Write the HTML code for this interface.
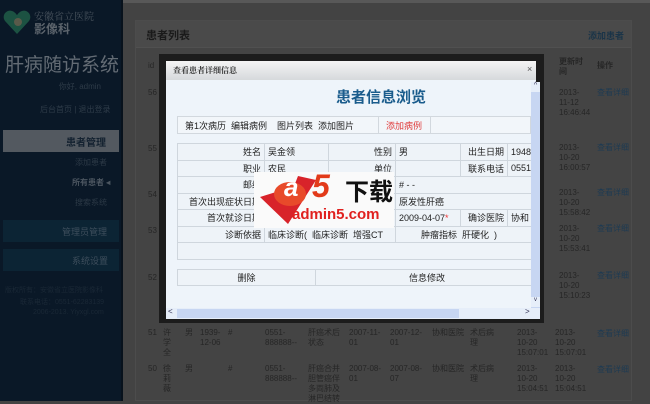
<!DOCTYPE html><html><head><meta charset="utf-8"><style>
*{margin:0;padding:0;box-sizing:border-box}
body{width:650px;height:401px;overflow:hidden;background:#434343;font-family:"Liberation Sans","Noto Sans CJK SC",sans-serif;position:relative}
.a{position:absolute;white-space:nowrap}
.sb{left:0;top:0;width:123px;height:401px;background:#0a1827;border-right:2px solid #08121c}
.t{font-size:8px;color:#262626;line-height:10px}
.lk{color:#1d3a52;font-size:8px}
table{border-collapse:collapse}
.dt td{border:1px solid #cfd6dd;font-size:9px;color:#222;height:16.5px;padding:0 3px;background:#eef3f8}
.r{text-align:right}
</style></head><body>
<div class="a" style="left:0;top:0;width:650px;height:3px;background:#585858"></div>
<div class="a sb"></div>
<div class="a" style="left:3px;top:9px;width:28px;height:26px"><svg width="28" height="26"><path d="M14 25 L2 12 C-2 6 4 0 9 2 C12 3 13 5 14 6 C15 5 16 3 19 2 C24 0 30 6 26 12 Z" fill="#1c5242"/><circle cx="15" cy="13" r="4" fill="#5a5a4a"/></svg></div>
<div class="a" style="left:34px;top:8px;font-size:10px;color:#4a545e;font-family:'Noto Serif CJK SC',serif">安徽省立医院</div>
<div class="a" style="left:34px;top:20px;font-size:12px;color:#5c646c;font-weight:bold">影像科</div>
<div class="a" style="left:5px;top:50px;font-size:19px;color:#636b74">肝病随访系统</div>
<div class="a" style="left:56px;top:81px;font-size:8px;color:#2e3b48;width:45px;text-align:right">你好, admin</div>
<div class="a" style="left:40px;top:104px;font-size:8px;color:#2e3b48">后台首页 | 退出登录</div>
<div class="a" style="left:3px;top:130px;width:116px;height:22px;background:#535960"></div>
<div class="a" style="left:66px;top:134px;font-size:10px;color:#142230;font-weight:bold">患者管理</div>
<div class="a" style="left:75px;top:157px;font-size:8px;color:#2c3946">添加患者</div>
<div class="a" style="left:72px;top:177px;font-size:8px;color:#4c5660;font-weight:bold">所有患者 ◂</div>
<div class="a" style="left:75px;top:197px;font-size:8px;color:#2c3946">搜索系统</div>
<div class="a" style="left:3px;top:220px;width:116px;height:22px;background:#0c2434"></div>
<div class="a" style="left:62px;top:225px;font-size:9px;color:#3e4e5c">管理员管理</div>
<div class="a" style="left:3px;top:249px;width:116px;height:22px;background:#0c2434"></div>
<div class="a" style="left:72px;top:254px;font-size:9px;color:#3e4e5c">系统设置</div>
<div class="a" style="left:5px;top:285px;font-size:7px;color:#1a2836">版权所有：安徽省立医院影像科</div>
<div class="a" style="left:20px;top:297px;font-size:7px;color:#1a2836">联系电话：0551-62283139</div>
<div class="a" style="left:33px;top:309px;font-size:7px;color:#1a2836">2006-2013. Yiyxgl.com</div>
<div class="a" style="left:135px;top:20px;width:497px;height:381px;background:#444;border:1px solid #4c4c4c"></div>
<div class="a" style="left:136px;top:21px;width:495px;height:27px;background:#4a4a4a;border-bottom:1px solid #505050"></div>
<div class="a" style="left:146px;top:27px;font-size:11px;color:#1a1a1a;font-weight:bold">患者列表</div>
<div class="a" style="left:588px;top:29px;font-size:9px;color:#1a3448;font-weight:bold">添加患者</div>
<div class="a t" style="left:148px;top:61px">id</div>
<div class="a t" style="left:559px;top:57px;font-weight:bold">更新时<br>间</div>
<div class="a t" style="left:597px;top:61px;font-weight:bold">操作</div>
<div class="a t" style="left:148px;top:88px">56</div><div class="a t" style="left:559px;top:88px">2013-<br>11-12<br>16:46:44</div><div class="a lk" style="left:597px;top:87px">查看详细</div>
<div class="a t" style="left:148px;top:144px">55</div><div class="a t" style="left:559px;top:143px">2013-<br>10-20<br>16:00:57</div><div class="a lk" style="left:597px;top:142px">查看详细</div>
<div class="a t" style="left:148px;top:190px">54</div><div class="a t" style="left:559px;top:188px">2013-<br>10-20<br>15:58:42</div><div class="a lk" style="left:597px;top:187px">查看详细</div>
<div class="a t" style="left:148px;top:226px">53</div><div class="a t" style="left:559px;top:224px">2013-<br>10-20<br>15:53:41</div><div class="a lk" style="left:597px;top:223px">查看详细</div>
<div class="a t" style="left:148px;top:273px">52</div><div class="a t" style="left:559px;top:271px">2013-<br>10-20<br>15:10:23</div><div class="a lk" style="left:597px;top:270px">查看详细</div>
<div class="a t" style="left:148px;top:328px">51</div><div class="a t" style="left:163px;top:328px">许<br>学<br>全</div><div class="a t" style="left:185px;top:328px">男</div><div class="a t" style="left:200px;top:328px">1939-<br>12-06</div><div class="a t" style="left:228px;top:328px">#</div><div class="a t" style="left:265px;top:328px">0551-<br>888888--</div><div class="a t" style="left:308px;top:328px">肝癌术后<br>状态</div><div class="a t" style="left:349px;top:328px">2007-11-<br>01</div><div class="a t" style="left:390px;top:328px">2007-12-<br>01</div><div class="a t" style="left:432px;top:328px">协和医院</div><div class="a t" style="left:470px;top:328px">术后病<br>理</div><div class="a t" style="left:517px;top:328px">2013-<br>10-20<br>15:07:01</div><div class="a t" style="left:555px;top:328px">2013-<br>10-20<br>15:07:01</div><div class="a lk" style="left:597px;top:328px">查看详细</div>
<div class="a t" style="left:148px;top:364px">50</div><div class="a t" style="left:163px;top:364px">徐<br>莉<br>薇</div><div class="a t" style="left:185px;top:364px">男</div><div class="a t" style="left:228px;top:364px">#</div><div class="a t" style="left:265px;top:364px">0551-<br>888888--</div><div class="a t" style="left:308px;top:364px">肝癌合并<br>胆管癌伴<br>多両肺及<br>淋巴结转</div><div class="a t" style="left:349px;top:364px">2007-08-<br>01</div><div class="a t" style="left:390px;top:364px">2007-08-<br>07</div><div class="a t" style="left:432px;top:364px">协和医院</div><div class="a t" style="left:470px;top:364px">术后病<br>理</div><div class="a t" style="left:517px;top:364px">2013-<br>10-20<br>15:04:51</div><div class="a t" style="left:555px;top:364px">2013-<br>10-20<br>15:04:51</div><div class="a lk" style="left:597px;top:364px">查看详细</div>
<div class="a" style="left:159px;top:54px;width:385px;height:269px;background:#1c1c1c"></div>
<div class="a" style="left:166px;top:61px;width:370px;height:258px;background:#eef4fa"></div>
<div class="a" style="left:166px;top:61px;width:370px;height:19px;background:linear-gradient(#f4f4f4,#d6d9dc)"></div>
<div class="a" style="left:173px;top:65px;font-size:8px;color:#333;font-weight:bold;font-family:'Noto Serif CJK SC',serif">查看患者详细信息</div>
<div class="a" style="left:527px;top:64px;font-size:9px;color:#555">×</div>
<div class="a" style="left:336px;top:86px;font-size:15px;color:#1a5c8c;font-weight:bold">患者信息浏览</div>
<div class="a" style="left:177px;top:116px;width:354px;height:18px;border:1px solid #d2d8de;background:#f2f6fa"></div>
<div class="a" style="left:185px;top:119px;font-size:9px;color:#222">第1次病历&nbsp;&nbsp;编辑病例&nbsp;&nbsp;&nbsp;&nbsp;图片列表&nbsp;&nbsp;添加图片</div>
<div class="a" style="left:378px;top:116px;width:1px;height:18px;background:#d2d8de"></div>
<div class="a" style="left:430px;top:116px;width:1px;height:18px;background:#d2d8de"></div>
<div class="a" style="left:386px;top:119px;font-size:9px;color:#e03b3b">添加病例</div>
<div class="a" style="left:177px;top:143px;width:354px;height:150px;overflow:hidden">
<table class="dt" style="width:362px">
<tr><td class="r" style="width:87px">姓名</td><td style="width:64px">吴金领</td><td class="r" style="width:67px">性别</td><td style="width:65px">男</td><td class="r" style="width:47px">出生日期</td><td>1948</td></tr>
<tr><td class="r">职业</td><td>农民</td><td class="r">单位</td><td></td><td class="r">联系电话</td><td>0551</td></tr>
<tr><td class="r">邮编</td><td></td><td></td><td colspan="3"># - -</td></tr>
<tr><td class="r">首次出现症状日期</td><td></td><td></td><td colspan="3">原发性肝癌</td></tr>
<tr><td class="r">首次就诊日期</td><td></td><td></td><td>2009-04-07<span style="color:#e33">*</span></td><td class="r">确诊医院</td><td>协和</td></tr>
<tr><td class="r">诊断依据</td><td colspan="2">临床诊断(&nbsp;&nbsp;临床诊断&nbsp;&nbsp;增强CT</td><td colspan="3" style="padding-left:25px">肿瘤指标&nbsp;&nbsp;肝硬化&nbsp;&nbsp;)</td></tr>
<tr><td colspan="6"></td></tr>
</table>
<table class="dt" style="width:362px;margin-top:9px">
<tr><td style="width:138px;text-align:center">删除</td><td style="text-align:center">信息修改</td></tr></table>
</div>
<div class="a" style="left:531px;top:82px;width:9px;height:226px;background:#c7d6f2"></div>
<div class="a" style="left:531px;top:82px;width:9px;height:10px;background:#e6eef9;font-size:7px;color:#335;text-align:center">^</div>
<div class="a" style="left:531px;top:297px;width:9px;height:10px;background:#e6eef9;font-size:6px;color:#335;text-align:center">v</div>
<div class="a" style="left:166px;top:308px;width:374px;height:11px;background:#e6eef9"></div>
<div class="a" style="left:177px;top:309px;width:282px;height:9px;background:#c7d6f2"></div>
<div class="a" style="left:168px;top:307px;font-size:8px;color:#335">&lt;</div>
<div class="a" style="left:525px;top:307px;font-size:8px;color:#335">&gt;</div>
<div class="a" style="left:254px;top:172px;width:140px;height:56px;background:#fafafa"></div>
<svg class="a" style="left:258px;top:172px" width="60" height="55"><path d="M2 25 L30 52 L58 8 L40 4 L30 30 L18 20 Z" fill="#d8232a"/><ellipse cx="32" cy="22" rx="16" ry="12" fill="#e84a2a"/></svg>
<div class="a" style="left:284px;top:172px;font-size:26px;font-weight:bold;color:#fff;font-style:italic">a</div>
<div class="a" style="left:312px;top:168px;font-size:32px;font-weight:bold;color:#e23a1a;font-style:italic">5</div>
<div class="a" style="left:345px;top:172px;font-size:24px;font-weight:bold;color:#111">下载</div>
<div class="a" style="left:292px;top:206px;font-size:15px;font-weight:bold;color:#e0201e">admin5.com</div>
</body></html>
